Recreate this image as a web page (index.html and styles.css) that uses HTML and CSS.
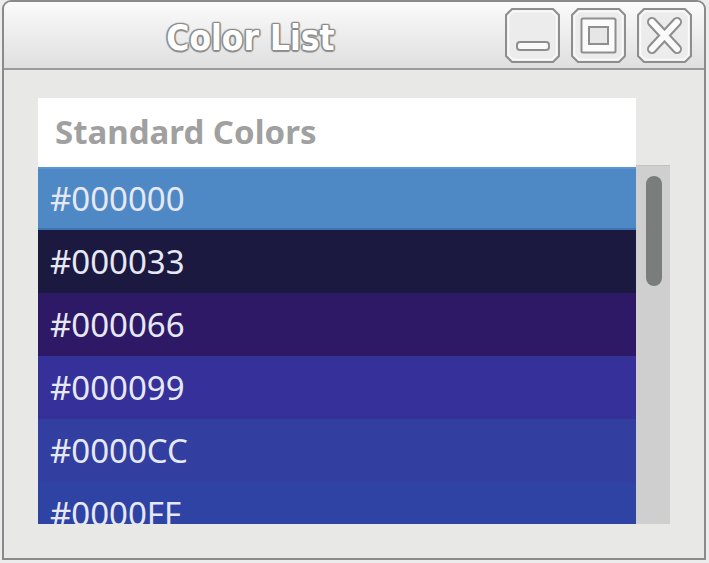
FILE: index.html
```html
<!DOCTYPE html>
<html>
<head>
<meta charset="utf-8">
<link rel="stylesheet" href="styles.css">
</head>
<body>
<div class="window">
  <div class="titlebar">
    <div class="title">Color List</div>
    <div class="buttons">
      <div class="tbtn">
        <svg width="55" height="55" viewBox="0 0 55 55">
          <polygon class="oct" points="7,1 48,1 54,7 54,48 48,54 7,54 1,48 1,7"/>
          <polygon class="oct-in" points="8,3.5 47,3.5 51.5,8 51.5,47 47,51.5 8,51.5 3.5,47 3.5,8"/>
          <rect x="12" y="34" width="32" height="8" rx="3" class="glyph"/>
        </svg>
      </div>
      <div class="tbtn">
        <svg width="55" height="55" viewBox="0 0 55 55">
          <polygon class="oct" points="7,1 48,1 54,7 54,48 48,54 7,54 1,48 1,7"/>
          <polygon class="oct-in" points="8,3.5 47,3.5 51.5,8 51.5,47 47,51.5 8,51.5 3.5,47 3.5,8"/>
          <rect x="10.5" y="10.5" width="34" height="34" rx="1.5" class="glyph"/>
          <rect x="18" y="19" width="19" height="17" class="glyph-inner"/>
        </svg>
      </div>
      <div class="tbtn">
        <svg width="55" height="55" viewBox="0 0 55 55">
          <polygon class="oct" points="7,1 48,1 54,7 54,48 48,54 7,54 1,48 1,7"/>
          <polygon class="oct-in" points="8,3.5 47,3.5 51.5,8 51.5,47 47,51.5 8,51.5 3.5,47 3.5,8"/>
          <path d="M15 14 L40 41 M40 14 L15 41" class="x-out"/>
          <path d="M15 14 L40 41 M40 14 L15 41" class="x-in"/>
        </svg>
      </div>
    </div>
  </div>
  <div class="content">
    <div class="list">
      <div class="list-header">Standard Colors</div>
      <div class="list-body">
        <div class="viewport">
          <div class="row selected">#000000</div>
          <div class="row c33">#000033</div>
          <div class="row c66">#000066</div>
          <div class="row c99">#000099</div>
          <div class="row ccc">#0000CC</div>
          <div class="row cff">#0000FF</div>
        </div>
        <div class="scrollbar">
          <div class="thumb"></div>
        </div>
      </div>
    </div>
  </div>
</div>
</body>
</html>
```

FILE: styles.css
```css
html, body {
  margin: 0;
  padding: 0;
}
body {
  background: #ececec;
  width: 709px;
  height: 563px;
  overflow: hidden;
}
.window {
  box-sizing: border-box;
  margin-left: 2px;
  width: 704px;
  height: 560px;
  border: 2px solid #8a8a8a;
  border-radius: 9px 9px 0 0;
  display: flex;
  flex-direction: column;
  overflow: hidden;
  background: #e8e8e6;
}
.titlebar {
  height: 66px;
  flex: none;
  display: flex;
  align-items: center;
  border-bottom: 2px solid #9a9a9a;
  background: linear-gradient(#fbfbfb, #f1f1f1 35%, #dfdfdf);
}
.title {
  flex: 1;
  align-self: stretch;
  box-sizing: border-box;
  padding-top: 16px;
  padding-right: 8px;
  line-height: 40px;
  text-align: center;
  font-family: "DejaVu Sans Condensed", "DejaVu Sans", sans-serif;
  font-stretch: condensed;
  font-weight: bold;
  font-size: 35px;
  color: #ffffff;
  text-shadow:
    1.5px 0 1px #8c8c8c, -1.5px 0 1px #8c8c8c,
    0 1.5px 1px #8c8c8c, 0 -1.5px 1px #8c8c8c,
    1px 1px 1px #8c8c8c, -1px -1px 1px #8c8c8c,
    1px -1px 1px #8c8c8c, -1px 1px 1px #8c8c8c;
}
.buttons {
  display: flex;
  gap: 11px;
  padding-right: 12px;
}
.tbtn {
  width: 55px;
  height: 55px;
}
.tbtn svg {
  display: block;
}
.oct {
  fill: #ececec;
  stroke: #8e8e8e;
  stroke-width: 2;
}
.oct-in {
  fill: none;
  stroke: #fafafa;
  stroke-width: 1.5;
}
.glyph {
  fill: #fbfbfb;
  stroke: #8e8e8e;
  stroke-width: 2;
}
.glyph-inner {
  fill: #e6e6e6;
  stroke: #8e8e8e;
  stroke-width: 2;
}
.x-out {
  stroke: #8e8e8e;
  stroke-width: 10;
  stroke-linecap: round;
  fill: none;
}
.x-in {
  stroke: #fbfbfb;
  stroke-width: 6;
  stroke-linecap: round;
  fill: none;
}
.content {
  flex: 1;
  padding: 28px 0 0 34px;
}
.list {
  width: 632px;
}
.list-header {
  width: 598px;
  height: 69px;
  box-sizing: border-box;
  background: #ffffff;
  padding-left: 17px;
  line-height: 67px;
  font-family: "Noto Sans", "Open Sans", sans-serif;
  font-weight: bold;
  font-size: 33px;
  color: #a0a0a0;
}
.list-body {
  display: flex;
}
.viewport {
  width: 598px;
  height: 357px;
  overflow: hidden;
  box-shadow: inset 0 -1px 0 #c9cbe8;
  position: relative;
}
.row {
  height: 63px;
  line-height: 63px;
  padding-left: 12px;
  font-family: "Noto Sans", "Open Sans", sans-serif;
  font-size: 33px;
  color: #e6e8f4;
}
.selected {
  background: #4f89c5;
  box-shadow: inset 0 2px 0 #5c95cf, inset 0 -2px 0 #3f74b2;
}
.c33 { background: #1b1940; }
.c66 { background: #2e1966; }
.c99 { background: #35309a; }
.ccc { background: #323ea0; }
.cff { background: #2e43a3; }
.scrollbar {
  width: 34px;
  height: 359px;
  margin-top: -2px;
  box-sizing: border-box;
  padding: 10px 0 0 10px;
  background: #cfcfcf;
  border-top: 1px solid #c2c2c2;
}
.thumb {
  width: 16px;
  height: 110px;
  border-radius: 8px;
  background: #7b7d7d;
}
```
